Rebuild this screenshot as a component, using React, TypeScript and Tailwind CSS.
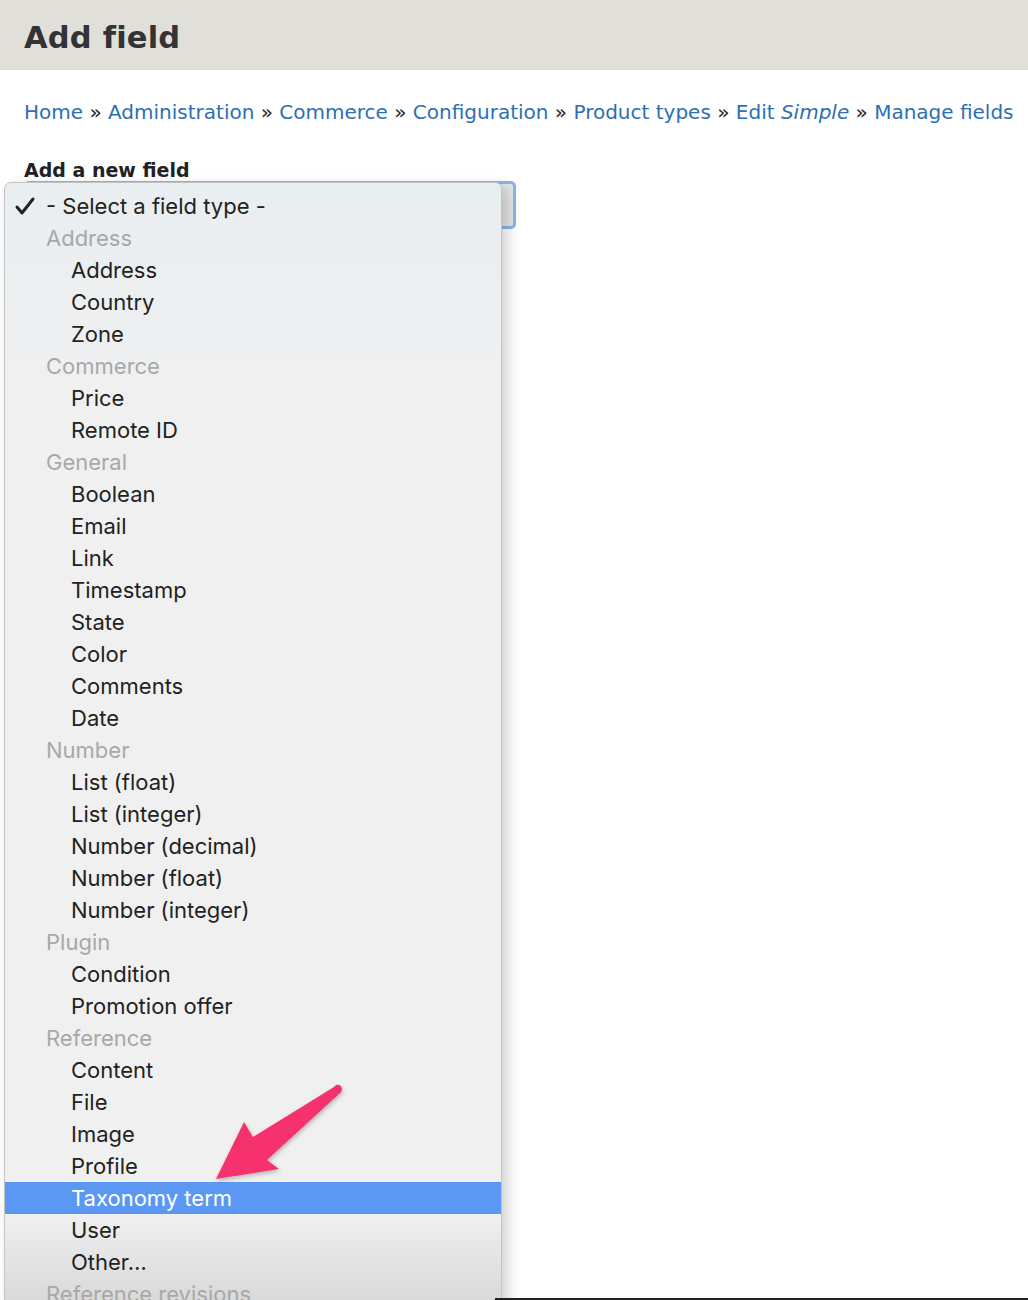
import React from 'react';

type Row = { label: string; kind: 'placeholder' | 'group' | 'item'; active?: boolean };

const groups: [string, string[]][] = [
  ['Address', ['Address', 'Country', 'Zone']],
  ['Commerce', ['Price', 'Remote ID']],
  ['General', ['Boolean', 'Email', 'Link', 'Timestamp', 'State', 'Color', 'Comments', 'Date']],
  ['Number', ['List (float)', 'List (integer)', 'Number (decimal)', 'Number (float)', 'Number (integer)']],
  ['Plugin', ['Condition', 'Promotion offer']],
  ['Reference', ['Content', 'File', 'Image', 'Profile', 'Taxonomy term', 'User', 'Other…']],
  ['Reference revisions', []],
];

const rows: Row[] = [{ label: '- Select a field type -', kind: 'placeholder' }];
groups.forEach(([g, items]) => {
  rows.push({ label: g, kind: 'group' });
  items.forEach((i) => rows.push({ label: i, kind: 'item', active: i === 'Taxonomy term' }));
});

const crumbs = ['Home', 'Administration', 'Commerce', 'Configuration', 'Product types'];

export default function App() {
  return (
    <div className="relative h-[1300px] w-[1028px] overflow-hidden bg-white font-['DejaVu_Sans',sans-serif] text-[#333]">
      {/* Page header */}
      <div className="h-[70px] bg-[#e0dfda] px-6 pt-[16px]">
        <h1 className="text-[30.5px] font-bold leading-[44px] text-[#333] tracking-[0.2px]">Add field</h1>
      </div>

      {/* Breadcrumb */}
      <nav className="whitespace-nowrap pl-6 pt-[28px] text-[20px] leading-[28px] text-[#2a2a2a]">
        {crumbs.map((c) => (
          <span key={c}>
            <a className="text-[#2d6fb3]">{c}</a> »{' '}
          </span>
        ))}
        <a className="text-[#2d6fb3]">
          Edit <em>Simple</em>
        </a>{' '}
        » <a className="text-[#2d6fb3]">Manage fields</a>
      </nav>

      {/* Form */}
      <div className="px-6 pt-[32px]">
        <label className="block text-[19px] font-bold leading-[24px] text-[#222]">Add a new field</label>
        <div className="mt-[-1px] h-[48px] w-[492px] rounded-[5px] border-[3px] border-[#8ab4ee] bg-[#e6e6e6]" />
      </div>

      {/* Open native menu */}
      <div className="absolute left-[4px] top-[182px] w-[498px] h-[1140px] rounded-t-[7px] border border-[#c4c4c4] bg-[linear-gradient(to_bottom,#e9eef0_0px,#f0f0f0_220px,#f0f0f0_1030px,#d9d9d9_1118px)] pt-[7px] shadow-[6px_4px_14px_rgba(0,0,0,0.18)] font-['Inter',sans-serif] text-[22px]">
        {rows.map((r, idx) => (
          <div
            key={idx}
            className={
              r.active
                ? 'flex h-[32px] items-center bg-[#5b98f4] pl-[66px] text-white'
                : r.kind === 'group'
                ? 'flex h-[32px] items-center pl-[41px] text-[#a8a8a8]'
                : r.kind === 'placeholder'
                ? 'flex h-[32px] items-center pl-[9px] text-[#222]'
                : 'flex h-[32px] items-center pl-[66px] text-[#222]'
            }
          >
            {r.kind === 'placeholder' && (
              <svg width="22" height="22" viewBox="0 0 22 22" className="mr-[10px]">
                <path d="M3 12 L8 18 L19 4" fill="none" stroke="#222" strokeWidth="3" strokeLinecap="round" strokeLinejoin="round" />
              </svg>
            )}
            {r.label}
          </div>
        ))}
      </div>

      {/* Annotation arrow */}
      <svg className="absolute left-0 top-0" width="1028" height="1300" viewBox="0 0 1028 1300">
        <defs>
          <filter id="sh" x="-20%" y="-20%" width="140%" height="140%">
            <feDropShadow dx="1" dy="2" stdDeviation="2" floodColor="#000" floodOpacity="0.25" />
          </filter>
        </defs>
        <path
          d="M336 1085 Q341 1084 342 1089 Q342 1092 339 1094 L267 1160 L279 1169 L216 1179 L244 1122 L253 1137 L334 1087 Z"
          fill="#f5336d"
          filter="url(#sh)"
        />
      </svg>

      {/* bottom dock strip */}
      <div className="absolute bottom-0 left-[495px] right-0 h-[2px] bg-[#222]" />
    </div>
  );
}
